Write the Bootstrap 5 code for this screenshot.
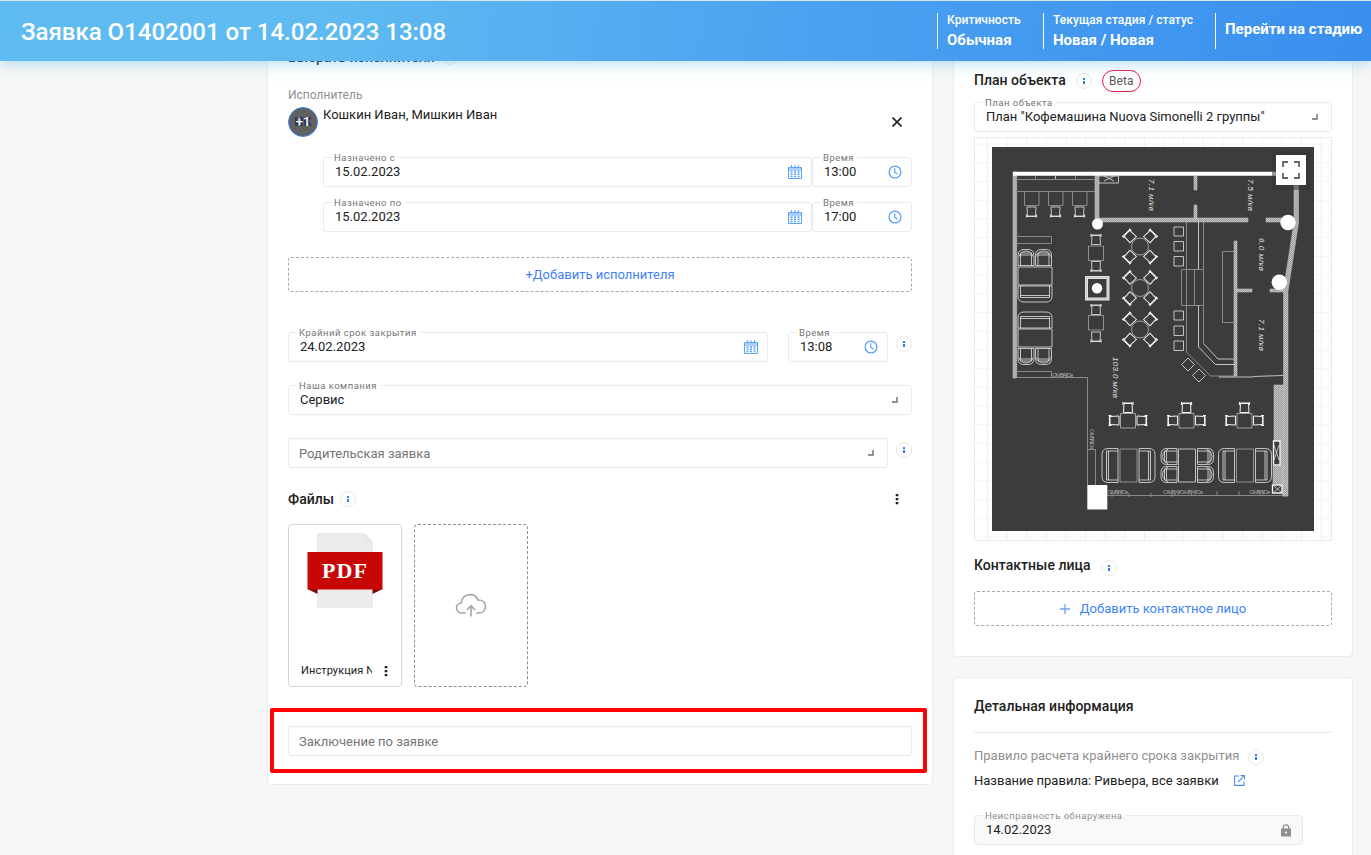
<!DOCTYPE html>
<html lang="ru">
<head>
<meta charset="utf-8">
<meta name="viewport" content="width=device-width, initial-scale=1">
<title>Заявка О1402001</title>
<link href="https://cdn.jsdelivr.net/npm/bootstrap@5.3.0/dist/css/bootstrap.min.css" rel="stylesheet">
<style>
body{font-family:Roboto,"Liberation Sans",sans-serif;font-size:13px;line-height:20px;color:#212121;background:#f7f7f7;height:855px;overflow:hidden;letter-spacing:0}
svg{display:block;flex:none}
.topbar{height:61px;border-top:1px solid #dfe3e6;background:linear-gradient(100deg,#5fbcf2 0%,#5ebaf1 25%,#4aa1f0 60%,#3a8fee 100%);box-shadow:0 2px 14px rgba(94,186,241,.5);color:#fff;z-index:10;position:relative;padding:0 9px 0 21px}
.topbar h1{font-size:24px;font-weight:500;letter-spacing:0;line-height:30px}
.stat{height:36px;border-left:1px solid #fff;padding-left:9px;line-height:18px;font-size:12px;font-weight:500;letter-spacing:.05px}
.stat strong{font-size:15px;font-weight:700;display:block;line-height:22px;letter-spacing:0}
.layout{padding-left:267px;gap:20px}
.panel{background:#fff;border:1px solid #ebebeb;border-radius:4px;padding:0 20px}
.panel-main{width:666px;height:745px;margin-top:-21px;position:relative}
.side{width:400px;margin-top:-21px}
.ttl{font-size:14px;font-weight:500;letter-spacing:.03px;line-height:20px;margin:0}
.muted{color:#909090}
.info{width:16px;height:16px;border:1px solid #e9e9e9;border-radius:50%;flex:none;background:#fff}
.fld{position:relative;height:30px;border:1px solid #ebebeb;border-radius:3px;background:#fff;padding:0 13px 0 11px;display:flex;align-items:center;justify-content:space-between}
.fld>label{position:absolute;top:-6px;left:8px;padding:0 3px 0 2px;background:#fff;font-size:9.5px;line-height:12px;color:#757575;letter-spacing:.5px;white-space:nowrap}
.fld .hint{color:#757575;margin:2px 0 0 -1px}
.fld.date{padding-right:9px}
.fld.time{width:100px;padding-right:9px}
.dash{height:35px;border:1px dashed #aaa;border-radius:3px;color:#3f82f7;display:flex;align-items:center;justify-content:center}
.avatar{width:30px;height:30px;border-radius:50%;border:1.5px solid #4285f4;background:#616161;color:#fff;font-weight:500;position:relative;font-size:13px;text-align:center;line-height:27px;letter-spacing:0}
.avatar i{position:absolute;inset:0;color:#27345c;font-style:normal;font-weight:700;font-size:13px}
.avatar b{position:relative;font-weight:500}
.filebox{width:114px;height:163px;border:1px solid #d6d6d6;border-radius:4px;position:relative}
.filebox.upload{border:1px dashed #8f8f8f;display:flex;align-items:center;justify-content:center}
.filename{font-size:11px;width:71px;overflow:hidden;white-space:nowrap;letter-spacing:.1px}
.marker{position:absolute;left:2px;top:667px;width:657px;height:65px;border:4px solid #f00;border-radius:2px}
.beta{border:1px solid #e91e45;border-radius:11px;width:39px;height:22px;line-height:20px;text-align:center;font-size:12px;color:#5a5a5a}
</style>
</head>
<body>
<svg width="0" height="0" class="position-absolute">
<defs>
<symbol id="cal" viewBox="0 0 14 14"><path d="M.5 2.500h13v11H.5zM.5 5h13M3.500 0v3M7 0v3M10.500 0v3" fill="none" stroke="#5aa3f5"/><path d="M1 3h12v1.600H1z" fill="#a9cffa"/><path d="M2.500 7h9M2.500 9.300h9M2.500 11.500h9" stroke="#5aa3f5" stroke-width="1.500" stroke-dasharray="2 1.500"/></symbol>
<symbol id="clk" viewBox="0 0 14 14"><circle cx="7" cy="7" r="5.900" fill="none" stroke="#5aa3f5" stroke-width="1.300"/><path d="M6.700 3.200V7.300L9.500 9" fill="none" stroke="#5aa3f5" stroke-width="1.200"/></symbol>
<symbol id="inf" viewBox="0 0 14 14"><path d="M6 4h2v2H6zM6 7h2v3H6z" fill="#2f80ed"/></symbol>
<symbol id="cor" viewBox="0 0 6 6"><path d="M0 5h5V0" fill="none" stroke="#6c6c6c" stroke-width="1.400"/></symbol>
<symbol id="dots" viewBox="0 0 4 12"><path d="M.7 1h2.600v2.300H.7zM.7 5h2.600v2.300H.7zM.7 9h2.600v2.300H.7z" fill="#212121"/></symbol>
</defs>
</svg>

<header class="topbar d-flex align-items-center">
  <h1 class="m-0 me-auto" style="padding-top:2px">Заявка О1402001 от 14.02.2023 13:08</h1>
  <div class="stat" style="width:106px"><div style="margin-top:-2px">Критичность</div><strong>Обычная</strong></div>
  <div class="stat" style="width:172px"><div style="margin-top:-2px">Текущая стадия / статус</div><strong>Новая / Новая</strong></div>
  <div class="stat d-flex align-items-center" style="width:147px"><strong class="text-nowrap pb-1">Перейти на стадию</strong></div>
</header>

<main class="layout d-flex align-items-start">
  <section class="panel panel-main">
    <div class="d-flex align-items-center" style="height:32px;gap:7px"><h2 class="ttl">Выбрать исполнителя</h2><svg class="info"><use href="#inf"/></svg></div>
    <div class="muted" style="font-size:12px;margin-top:12px">Исполнитель</div>
    <div class="d-flex" style="height:52px;padding-top:2px">
      <div class="avatar"><i>ИК</i><b>+1</b></div>
      <div style="margin:-2px auto 0 5px">Кошкин Иван, Мишкин Иван</div>
      <svg width="10" height="10" viewBox="0 0 10 10" style="margin:10px 10px 0 0"><path d="M.5.5l9 9M9.500.5l-9 9" stroke="#212121" stroke-width="1.600"/></svg>
    </div>
    <div class="d-flex" style="margin-left:35px">
      <div class="fld date flex-grow-1"><label>Назначено с</label><span>15.02.2023</span><svg width="14" height="14"><use href="#cal"/></svg></div>
      <div class="fld time"><label>Время</label><span>13:00</span><svg width="14" height="14"><use href="#clk"/></svg></div>
    </div>
    <div class="d-flex" style="margin:15px 0 0 35px">
      <div class="fld date flex-grow-1"><label>Назначено по</label><span>15.02.2023</span><svg width="14" height="14"><use href="#cal"/></svg></div>
      <div class="fld time"><label>Время</label><span>17:00</span><svg width="14" height="14"><use href="#clk"/></svg></div>
    </div>
    <div class="dash" style="margin-top:25px">+Добавить исполнителя</div>
    <div class="d-flex" style="margin-top:40px">
      <div class="fld date" style="width:480px"><label>Крайний срок закрытия</label><span>24.02.2023</span><svg width="14" height="14"><use href="#cal"/></svg></div>
      <div class="fld time" style="margin-left:20px"><label>Время</label><span>13:08</span><svg width="14" height="14"><use href="#clk"/></svg></div>
      <svg class="info" style="margin:4px 0 0 8px"><use href="#inf"/></svg>
    </div>
    <div class="fld" style="margin-top:23px"><label>Наша компания</label><span>Сервис</span><svg width="6" height="6"><use href="#cor"/></svg></div>
    <div class="d-flex" style="margin-top:23px">
      <div class="fld" style="width:600px"><span class="hint">Родительская заявка</span><svg width="6" height="6"><use href="#cor"/></svg></div>
      <svg class="info" style="margin:4px 0 0 8px"><use href="#inf"/></svg>
    </div>
    <div class="d-flex align-items-center" style="margin-top:21px;height:20px">
      <h2 class="ttl">Файлы</h2><svg class="info" style="margin-left:6px"><use href="#inf"/></svg>
      <svg class="ms-auto" width="4" height="12" style="margin-right:13px"><use href="#dots"/></svg>
    </div>
    <div class="d-flex" style="margin-top:15px;gap:12px">
      <div class="filebox">
        <svg width="78" height="78" viewBox="306 532 78 78" style="margin:7px 0 0 17px"><path d="M317 533h47l9 9v66h-56z" fill="#ececec"/><path d="M364 533l9 9h-9z" fill="#e6e6e6"/><path d="M307.500 589h10v5zM382.500 589h-10v5z" fill="#7c0605"/><path d="M307.500 552h75v37.500h-75z" fill="#c90606"/><text x="322" y="578" textLength="46" lengthAdjust="spacingAndGlyphs" letter-spacing="1" font-family="Liberation Serif,serif" font-weight="700" font-size="20" fill="#fff">PDF</text></svg>
        <div class="d-flex align-items-center" style="padding:51px 13px 0 12px"><span class="filename">Инструкция N</span><svg class="ms-auto" width="4" height="12"><use href="#dots"/></svg></div>
      </div>
      <div class="filebox upload"><svg width="32" height="26" viewBox="0 0 32 26" fill="none" stroke="#a9a9a9" stroke-width="1.700"><path d="M11 20H7.500C4 20 1.500 18 1.500 15c0-3 2-4.600 4.800-5C6.500 5 10 1.600 15 1.600c4 0 6.700 2 8 5.400C27.500 7 30.500 9.500 30.500 13.500c0 4-3 6.500-6.500 6.500h-3M16 23.500V13M11.800 17L16 12.800 20.200 17"/></svg></div>
    </div>
    <div class="fld" style="margin-top:39px"><span class="hint">Заключение по заявке</span></div>
    <div class="marker"></div>
  </section>

  <div class="side">
    <section class="panel" style="height:617px">
      <div class="d-flex align-items-center" style="padding-top:29px"><h2 class="ttl" style="margin-top:-2px">План объекта</h2><svg class="info" style="margin-left:10px"><use href="#inf"/></svg><span class="beta" style="margin-left:10px">Beta</span></div>
      <div class="fld" style="margin-top:10px"><label>План объекта</label><span>План "Кофемашина Nuova Simonelli 2 группы"</span><svg width="6" height="6"><use href="#cor"/></svg></div>
      <svg style="margin-top:5px" width="358" height="404" viewBox="974 137 358 404">
        <defs>
          <pattern id="grid" x="987" y="143.700" width="19.630" height="18.700" patternUnits="userSpaceOnUse"><path d="M.5 0V19" stroke="#efefef"/><path d="M0 .5H20" stroke="#e6e6e6" stroke-dasharray="1 1.500"/></pattern>
          <pattern id="hatch" width="2" height="2" patternUnits="userSpaceOnUse"><path d="M0 0h2v2H0z" fill="#989898"/><path d="M0 0h1v1H0zM1 1h1v1H1z" fill="#c6c6c6"/></pattern>
          <g id="chair"><path d="M-4.500-4.500L-4 4.500H4L4.500-4.500z"/><path d="M-5 5H5M-5 3v3M5 3v3" stroke-width="1.200"/></g>
          <g id="round"><circle r="8.500" stroke="#a0a0a0"/><use href="#chair" transform="translate(-10-10) rotate(135)"/><use href="#chair" transform="translate(10-10) rotate(225)"/><use href="#chair" transform="translate(-10 10) rotate(45)"/><use href="#chair" transform="translate(10 10) rotate(-45)"/></g>
          <g id="trio"><path d="M-7.500-7h15V7.500h-15z" stroke="#a0a0a0"/><use href="#chair" transform="translate(0-12.500) rotate(180)"/><use href="#chair" transform="translate(-13.500 0) rotate(90)"/><use href="#chair" transform="translate(13.500 0) rotate(-90)"/></g>
          <g id="arm"><path d="M-8 8V-2Q-8-8-2-8H2Q8-8 8-2V8zM-5.500 8V-4.500H5.500V8M-5.500-2.500H5.500M-7-1Q-6-6 0-6.500Q6-6 7-1"/></g>
          <g id="sofa"><path d="M-17 8V-2Q-17-8-11-8H11Q17-8 17-2V8zM-14.500 8V-3.500H14.500V8M-14.500-1.500H14.500"/></g>
          <g id="sofaset"><use href="#sofa" transform="translate(-18.500 0) rotate(-90)"/><path d="M-8.500-16.500h17v33h-17z" stroke="#a0a0a0"/><use href="#sofa" transform="translate(18.500 0) rotate(90)"/></g>
        </defs>
        <path d="M974 137h358v404H974z" fill="#fff"/><path d="M974 137h358v404H974z" fill="url(#grid)"/>
        <path d="M974.500 137.500h357v403h-357z" fill="none" stroke="#e9e9e9"/>
        <path d="M992 147h322v384H992z" fill="#3c3c3c"/>
        <g fill="url(#hatch)">
          <path d="M1013 172h3.700v206H1013zM1095 175h4v48h-4zM1099 218h149v4H1099zM1266 218h20v4h-20zM1194 176h3v14h-3zM1194 205h3v14h-3zM1294 180h4.500v43l-10.500 68v205h-4.500V290l10.500-68zM1234 241h3v135h-3zM1236 289h16v3h-16zM1270 289h14v3h-14zM1274 385h9.500v6h4v105h-5v-30h-3v-25h-5.500zM1273 466h10v18h-10z" stroke="#bcbcbc" stroke-width=".6"/>
        </g>
        <path d="M1013 171.800h283v4h-283z" fill="#fff"/>
        <g fill="none" stroke="#8a8a8a">
          <path d="M1016 179.500h79M1016 191.500h79M1035.500 176v3M1075.500 176v3M1024.500 191.500v14h14.500v-14M1048.500 191.500v14h14.500v-14M1072.500 191.500v14h14.500v-14M1016.500 236.500h35v7h-35M1016.500 377.500h71V485M1016.500 371.500h35v6M1088 449.500h7.500V485M1107 495.500h176M1186.500 222v130l24 24H1234M1203.500 222v47M1222.500 251.500h12M1222.500 251.500v71h12M1181.500 269.500h22v36h-22zM1194.500 269.500v36M1203.500 305.500v38M1112 493v4M1129 493v4M1151 493v4M1172 493v4M1217 491v4M1239 491v4"/>
        </g>
        <g fill="none" stroke="#dcdcdc" stroke-width=".85">
          <path d="M1055.500 176v3M1098 176h20.500v7H1098M1104 176l10 5M1114 176l-10 5M1198.500 222v47M1198.500 305.500V347l17 17.500h19M1203.500 343.500l14.500 15.500h16M1219 377h34M1253 376.500l30-1"/>
          <path d="M1018 267h34v18h-34zM1018 329h34v18h-34z"/>
          <path d="M1088.500 246h15v14.500h-15zM1088.500 315.500h15v14.500h-15z" stroke="#a0a0a0"/>
          <use href="#chair" x="1031.500" y="211.500"/><use href="#chair" x="1055.500" y="211.500"/><use href="#chair" x="1079.500" y="211.500"/>
          <use href="#arm" x="1026" y="257.500"/><use href="#arm" x="1043.500" y="257.500"/>
          <use href="#sofa" transform="translate(1035 294) scale(1 -1)"/><use href="#sofa" x="1035" y="320"/>
          <use href="#arm" transform="translate(1026 356.500) scale(1 -1)"/><use href="#arm" transform="translate(1043.500 356.500) scale(1 -1)"/>
          <use href="#chair" transform="translate(1096 240) rotate(180)"/><use href="#chair" x="1096" y="266"/><use href="#chair" transform="translate(1096 310) rotate(180)"/><use href="#chair" x="1096" y="336.500"/>
          <g stroke="#f4f4f4" stroke-width="1"><use href="#round" x="1140" y="246.500"/><use href="#round" x="1140" y="288"/><use href="#round" x="1140" y="329.500"/>
          <use href="#trio" x="1128" y="420.500"/><use href="#trio" x="1186.500" y="420.500"/><use href="#trio" x="1244.500" y="420.500"/></g>
          <use href="#sofaset" x="1128.500" y="465.500"/><use href="#sofaset" x="1245" y="465.500"/>
          <path d="M1178.500 449h17v33h-17z"/>
          <use href="#arm" transform="translate(1169 456.500) rotate(-90)"/><use href="#arm" transform="translate(1169 474.500) rotate(-90)"/><use href="#arm" transform="translate(1205.500 456.500) rotate(90)"/><use href="#arm" transform="translate(1205.500 474.500) rotate(90)"/>
          <path d="M1174 227h9.500v9h-9.500zM1174 241.500h9.500v9.500h-9.500zM1174 256.500h9.500v9.500h-9.500zM1174 311h9.500v9h-9.500zM1174 326h9.500v9.500h-9.500zM1174 341h9.500v9.500h-9.500zM1188 358l6.500 6.500-6.500 6.500-6.500-6.500zM1199 369l6.500 6.500-6.500 6.500-6.500-6.500z"/>
        </g>
        <path d="M1086.500 277.500h21.500v21.500h-21.500z" fill="none" stroke="#e4e4e4" stroke-width="3"/><path d="M1086.500 277.500h21.500v21.500h-21.500z" fill="none" stroke="#aaa" stroke-dasharray="1 1"/>
        <g fill="#3c3c3c" stroke="#f2f2f2" stroke-width="1.400"><path d="M1273.500 441h6.500v24h-6.500zM1272.500 485h9.500v8h-9.500z"/><path d="M1274 445l5 15M1279 445l-5 15M1274 486l7 6M1281 486l-7 6" stroke-width=".7"/></g>
        <g fill="#fff"><circle cx="1097.500" cy="224" r="5.500"/><circle cx="1097" cy="288.300" r="5.200"/><circle cx="1288" cy="222.500" r="7.700"/><circle cx="1279.300" cy="282.300" r="7.700"/><path d="M1087.300 485h20v24.500h-20z"/></g>
        <g fill="#e2e2e2" font-family="Liberation Sans,sans-serif" font-style="italic" font-size="8">
          <text transform="translate(1149 179) rotate(90)" textLength="32">7.1 м/кв</text>
          <text transform="translate(1248 179) rotate(90)" textLength="32">7.5 м/кв</text>
          <text transform="translate(1258.500 238) rotate(90)" textLength="33">6.0 м/кв</text>
          <text transform="translate(1259 319) rotate(90)" textLength="32">7.1 м/кв</text>
          <text transform="translate(1112.500 357) rotate(90)" textLength="41">103.0 м/кв</text>
        </g>
        <g fill="#a4a4a4" font-family="Liberation Sans,sans-serif" font-style="italic" font-size="6">
          <text x="1052" y="377" textLength="21">О-МВ(А)/Оа</text><text x="1107" y="493.500" textLength="21">О-МВ(А)/Оа</text><text x="1163" y="493.500" textLength="40">О-МВ(А)/О-МВ(А)/Оа</text><text x="1249" y="493.500" textLength="21">О-МВ(А)/Оа</text><text transform="translate(1089.500 429) rotate(90)" textLength="20">О-МВ(А)/Оа</text>
        </g>
        <path d="M1272 152h38v38h-38z" fill="#333" opacity=".5"/><path d="M1276 155h30v30h-30z" fill="#fff"/>
        <path d="M1283 167v-5h5M1294 162h5v5M1299 173v5h-5M1288 178h-5v-5" fill="none" stroke="#666" stroke-width="1.800"/>
      </svg>
      <div class="d-flex" style="margin-top:14px"><h2 class="ttl">Контактные лица</h2><svg class="info" style="margin:5px 0 0 10px"><use href="#inf"/></svg></div>
      <div class="dash" style="margin-top:15px;gap:10px"><svg width="10" height="10" viewBox="0 0 10 10"><path d="M5 0v10M0 5h10" stroke="#6ea5f8" stroke-width="1.300"/></svg>Добавить контактное лицо</div>
    </section>
    <section class="panel" style="margin-top:20px;height:200px">
      <h2 class="ttl" style="padding-top:18px;height:54px">Детальная информация</h2>
      <div style="border-top:1px solid #ebebeb;padding-top:13px" class="d-flex"><span class="muted">Правило расчета крайнего срока закрытия</span><svg class="info" style="margin:3px 0 0 9px"><use href="#inf"/></svg></div>
      <div class="d-flex" style="margin-top:5px"><span>Название правила: Ривьера, все заявки</span><svg width="11" height="11" viewBox="0 0 11 11" style="margin:4px 0 0 15px" fill="none" stroke="#4a90f5" stroke-width="1.100"><path d="M5 1H.6v9.400H10V6.500M6.500.6h4v4M10.300.8L4 7"/></svg></div>
      <div class="fld" style="margin-top:24px;width:329px;background:#f9f9f9;padding-right:11px"><label style="background:linear-gradient(#fff 50%,#f9f9f9 50%);color:#909090">Неисправность обнаружена</label><span>14.02.2023</span><svg width="10" height="13" viewBox="0 0 10 13"><path d="M0 4.500h10V12.500H0z" fill="#8f8f8f"/><path d="M2.300 5V3.500a2.700 2.700 0 015.400 0V5" fill="none" stroke="#8f8f8f" stroke-width="1.300"/><circle cx="5" cy="8.500" r="1.100" fill="#f9f9f9"/></svg></div>
    </section>
  </div>
</main>
<script src="https://cdn.jsdelivr.net/npm/bootstrap@5.3.0/dist/js/bootstrap.bundle.min.js"></script>
</body>
</html>
